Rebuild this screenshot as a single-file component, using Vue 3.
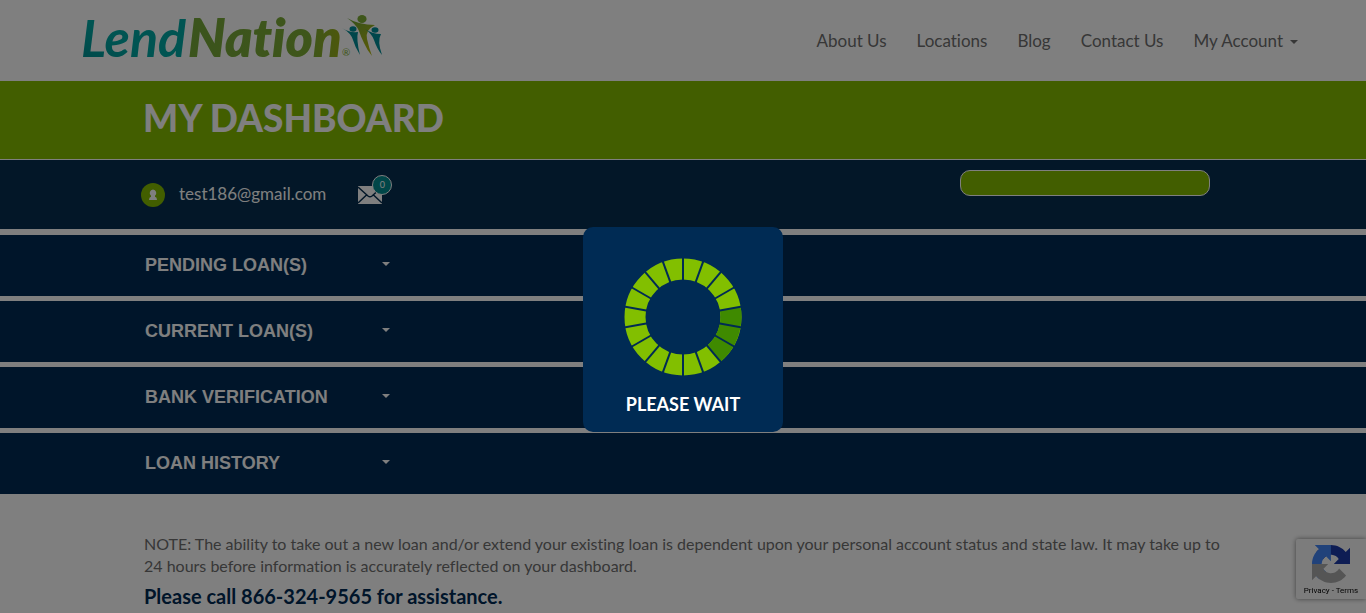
<script setup>
const links = ['About Us', 'Locations', 'Blog', 'Contact Us']
const sections = ['PENDING LOAN(S)', 'CURRENT LOAN(S)', 'BANK VERIFICATION', 'LOAN HISTORY']
const ticks = Array.from({ length: 18 }, (_, i) => i * 20)
</script>

<template>
  <div class="page">
    <header class="top">
      <a href="#" class="logo" aria-label="LendNation">
        <svg width="304" height="52" viewBox="0 0 304 52">
          <defs>
            <linearGradient id="teal" x1="0" y1="1" x2="1" y2="0">
              <stop offset="0" stop-color="#008c90" />
              <stop offset="0.4" stop-color="#00a9a4" />
            </linearGradient>
            <linearGradient id="leaf" x1="0" y1="0" x2="1" y2="0">
              <stop offset="0" stop-color="#76a83a" />
              <stop offset="0.8" stop-color="#7dac35" />
              <stop offset="1" stop-color="#9caf16" />
            </linearGradient>
            <linearGradient id="body" x1="0" y1="0" x2="0.7" y2="1">
              <stop offset="0" stop-color="#6aa23a" />
              <stop offset="1" stop-color="#b4b60c" />
            </linearGradient>
          </defs>
          <text x="-1" y="44" class="lend" fill="url(#teal)">Lend</text>
          <text x="106" y="44" class="nation" fill="url(#leaf)">Nation</text>
          <text x="260" y="43" class="reg" fill="#7dac35">®</text>
          <ellipse cx="280" cy="6" rx="4.6" ry="4" fill="#7dac35" />
          <path d="M265 5Q277 12 293 12Q283 17 285 26Q287 35 290 43Q285 37 282 30Q279 24 277 18Q274 11 265 5Z" fill="url(#body)" />
          <ellipse cx="271" cy="16" rx="3.500" ry="2.800" fill="#008c96" />
          <path d="M260 15Q267 20 276 19Q274 26 278 42Q273 34 271 27Q269 20 260 15Z" fill="#008c96" />
          <ellipse cx="293" cy="17" rx="3.500" ry="2.800" fill="#008c96" />
          <path d="M283 16Q290 21 299 21Q295 28 300 42Q295 36 292 27Q290 21 283 16Z" fill="#008c96" />
        </svg>
      </a>
      <nav class="nav">
        <a v-for="l in links" :key="l" href="#">{{ l }}</a>
        <a href="#">My Account<span class="caret"></span></a>
      </nav>
    </header>

    <div class="banner"><h1 class="wrap">MY DASHBOARD</h1></div>

    <div class="userbar">
      <div class="wrap userrow">
        <svg class="avatar" width="24" height="24" viewBox="0 0 24 24">
          <circle cx="12" cy="12" r="12" fill="#84bc00" />
          <path d="M12 6.500a3.500 3.500 0 0 1 2 6.200v1Q16 14 16 17H8Q8 14 10 13.700v-1A3.500 3.500 0 0 1 12 6.500Z" fill="#fff" />
        </svg>
        <span class="email">test186@gmail.com</span>
        <a href="#" class="mail" aria-label="Messages">
          <svg width="24" height="18" viewBox="0 0 24 18">
            <rect width="24" height="18" fill="#fff" />
            <path d="M0 1L10 10Q12 11.500 14 10L24 1M0 17L8.500 9M24 17L15.500 9" fill="none" stroke="#062f50" stroke-width="1.500" />
          </svg>
          <span class="count">0</span>
        </a>
        <button type="button" class="pill" aria-label="Loan action"></button>
      </div>
    </div>

    <main>
      <button v-for="s in sections" :key="s" type="button" class="section">
        <span class="wrap sectionrow"><span class="sectiontitle">{{ s }}</span><span class="caret"></span></span>
      </button>
      <div class="wrap note">
        <p>NOTE: The ability to take out a new loan and/or extend your existing loan is dependent upon your personal account status and state law. It may take up to 24 hours before information is accurately reflected on your dashboard.</p>
        <p class="call">Please call 866-324-9565 for assistance.</p>
      </div>
    </main>

    <aside class="captcha">
      <svg width="38" height="38" viewBox="0 0 64 64">
        <path fill="#1c3aa9" d="M64 31.955l-.033-1.370V4.687l-7.160 7.160C50.948 4.674 42.033.093 32.050.093c-10.400 0-19.622 4.960-25.458 12.640l11.736 11.860a15.550 15.550 0 0 1 4.754-5.334c2.050-1.600 4.952-2.906 8.968-2.906.485 0 .860.057 1.135.163 4.976.393 9.288 3.140 11.828 7.124l-8.307 8.307L64 31.953" />
        <path fill="#4285f4" d="M31.862.094l-1.370.033H4.594l7.160 7.160C4.580 13.147 0 22.060 0 32.046c0 10.400 4.960 19.622 12.640 25.458L24.500 45.768a15.550 15.550 0 0 1-5.334-4.754c-1.600-2.050-2.906-4.952-2.906-8.968 0-.485.057-.860.163-1.135.393-4.976 3.140-9.288 7.124-11.828l8.307 8.307L31.860.095" />
        <path fill="#ababab" d="M.001 32.045l.033 1.370v25.898l7.160-7.160c5.860 7.173 14.774 11.754 24.760 11.754 10.400 0 19.622-4.960 25.458-12.640l-11.736-11.860a15.550 15.550 0 0 1-4.754 5.334c-2.050 1.600-4.952 2.906-8.968 2.906-.485 0-.860-.057-1.135-.163-4.976-.393-9.288-3.140-11.828-7.124l8.307-8.307c-10.522.040-22.400.066-27.295-.005" />
      </svg>
      <div class="terms"><a href="#">Privacy</a> - <a href="#">Terms</a></div>
    </aside>

    <div class="overlay">
      <div class="dialog" role="status">
        <svg width="118" height="118" viewBox="-59 -59 118 118">
          <circle r="48" fill="none" stroke="#82bf00" stroke-width="21" />
          <path d="M47.270 -8.335A48 48 0 0 1 30.850 36.770" fill="none" stroke="#3f8a00" stroke-width="21" />
          <line v-for="t in ticks" :key="t" y1="-36" y2="-60" stroke="#002b54" stroke-width="2" :transform="`rotate(${t})`" />
        </svg>
        <div class="wait">PLEASE WAIT</div>
      </div>
    </div>
  </div>
</template>

<style>
body {
  background: #fff;
}
</style>

<style scoped>
.page {
  font-family: Lato, "Liberation Sans", sans-serif;
  font-variant-ligatures: none;
  color: #6e6e6e;
}
a {
  color: inherit;
  text-decoration: none;
}
.wrap {
  box-sizing: border-box;
  width: 100%;
  max-width: 1080px;
  margin: 0 auto;
}
.top {
  display: flex;
  justify-content: space-between;
  align-items: center;
  height: 81px;
  padding: 0 68px 0 82px;
}
.logo svg {
  display: block;
  overflow: visible;
  margin-bottom: 4px;
}
.lend,
.nation {
  font-family: Lato, sans-serif;
  font-style: italic;
  font-size: 52px;
  font-weight: 700;
}
.nation {
  font-weight: 800;
}
.reg {
  font-family: Lato, sans-serif;
  font-size: 10px;
}
.nav {
  display: flex;
  gap: 30px;
  font-size: 17px;
  line-height: 24px;
}
.caret {
  display: inline-block;
  border: 4px solid transparent;
  border-top-color: currentColor;
  border-bottom: 0;
  vertical-align: middle;
}
.nav .caret {
  margin-left: 7px;
}
.banner {
  background: #84bc00;
  border-bottom: 1px solid #fff;
}
h1 {
  padding-bottom: 4px;
  color: #fff;
  font-size: 37px;
  line-height: 74px;
  font-weight: 900;
}
.userbar {
  background: #062f50;
  margin-bottom: 6px;
}
.userrow {
  display: flex;
  align-items: center;
  height: 69px;
  padding-right: 13px;
  color: #fff;
}
.avatar {
  margin-left: -2px;
}
.email {
  margin-left: 14px;
  padding-bottom: 2px;
  font-size: 17px;
}
.mail {
  position: relative;
  margin-left: 32px;
}
.mail svg {
  display: block;
}
.count {
  position: absolute;
  left: 14px;
  top: -11px;
  width: 18px;
  height: 18px;
  border: 1px solid #fff;
  border-radius: 50%;
  background: #008c90;
  font-size: 9px;
  line-height: 18px;
  text-align: center;
}
.pill {
  width: 250px;
  height: 26px;
  margin: 0 0 24px auto;
  border: 1px solid #fff;
  border-radius: 10px;
  background: #84bc00;
}
.section {
  display: block;
  width: 100%;
  margin: 0 0 5px;
  padding: 0;
  border: 0;
  background: #002b54;
  color: #fff;
  font: bold 18px/61px "Liberation Sans", Arial, sans-serif;
  text-align: left;
}
.sectionrow {
  display: flex;
  align-items: center;
  padding-left: 2px;
}
.sectionrow .caret {
  margin-bottom: 4px;
}
.sectiontitle {
  width: 237px;
}
.note {
  padding: 34px 2px 0 1px;
  font-size: 16px;
  line-height: 22px;
}
.note p {
  margin: 0;
}
.note .call {
  margin-top: 8px;
  color: #002b54;
  font-size: 20px;
  font-weight: 700;
}
.captcha {
  position: fixed;
  right: 0;
  bottom: 14px;
  width: 70px;
  height: 54px;
  padding-top: 6px;
  border-radius: 2px 0 0 2px;
  background: #f9f9f9;
  box-shadow: 0 0 5px gray;
  text-align: center;
}
.captcha svg {
  display: block;
  margin: 0 auto;
}
.terms {
  color: #000;
  font: 8px/16px Roboto, sans-serif;
}
.overlay {
  position: fixed;
  inset: 0;
  display: flex;
  align-items: center;
  justify-content: center;
  padding-top: 46px;
  background: rgba(0, 0, 0, 0.5);
}
.dialog {
  display: flex;
  flex-direction: column;
  align-items: center;
  width: 200px;
  padding: 31px 0 16px;
  border-radius: 10px;
  background: #002b54;
}
.wait {
  margin-top: 16px;
  color: #fff;
  font-size: 18px;
  line-height: 24px;
  font-weight: 700;
}
</style>
